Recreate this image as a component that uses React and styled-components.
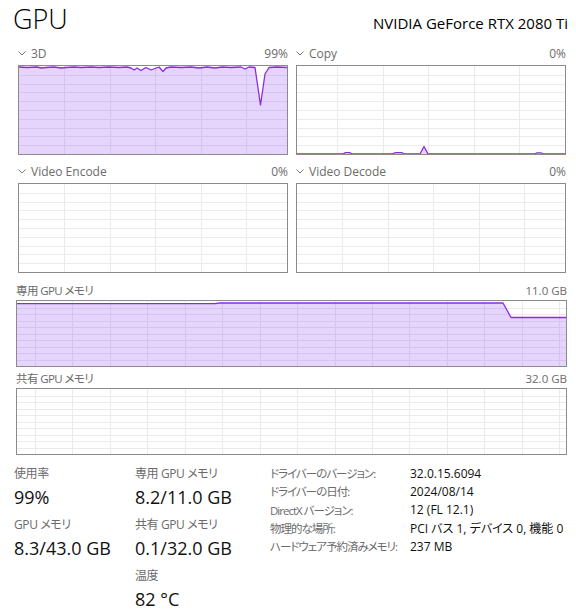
import styled, { createGlobalStyle } from "styled-components";

const GlobalStyle = createGlobalStyle`
  body {
    margin: 0;
    background: #fff;
    font-family: "Open Sans", "Noto Sans CJK JP", sans-serif;
    font-feature-settings: "palt";
    color: #000;
  }
`;

const FILL = "rgba(125, 45, 240, 0.2)";
const LINE = "#8a2be2";

const Page = styled.div`
  width: 576px;
  height: 612px;
  overflow: hidden;
`;

const Header = styled.header`
  height: 42px;
  display: flex;
  align-items: baseline;
  justify-content: space-between;
  padding: 0 8px 0 13px;
`;

const Title = styled.h1`
  margin: 0;
  font-size: 27px;
  font-weight: 300;
  line-height: 38px;
`;

const DeviceName = styled.div`
  font-size: 15px;
`;

const ChartGrid = styled.div`
  display: grid;
  grid-template-columns: 270px 270px;
  column-gap: 8px;
  row-gap: 5px;
  padding: 0 10px 0 18px;
`;

const ChartHead = styled.div`
  height: 23px;
  display: flex;
  align-items: center;
  justify-content: space-between;
  font-size: 12px;
  color: #6b6b6b;
`;

const HeadName = styled.span`
  display: inline-flex;
  align-items: center;
  gap: 5px;
`;

const GraphBox = styled.div`
  box-sizing: border-box;
  height: ${(p) => p.$h}px;
  border: 1px solid #8b8b8b;
  background: #fff;
  svg {
    display: block;
  }
`;

const MemorySection = styled.section`
  padding: 0 9px 0 16px;
  margin-top: 7px;
`;

const MemHead = styled.div`
  height: 20px;
  display: flex;
  align-items: center;
  justify-content: space-between;
  font-size: 11.5px;
  color: #6b6b6b;
  margin-top: ${(p) => p.$gap || 0}px;
`;

const Jp = styled.span`
  letter-spacing: -0.6px;
`;

const Stats = styled.div`
  display: grid;
  grid-template-columns: 121px 135px 1fr;
  padding: 0 0 0 14px;
  margin-top: 8px;
`;

const StatColumn = styled.div`
  display: flex;
  flex-direction: column;
`;

const StatLabel = styled.div`
  height: 21px;
  line-height: 21px;
  font-size: 12px;
  color: #6b6b6b;
  letter-spacing: -0.4px;
`;

const StatValue = styled.div`
  height: 30px;
  line-height: 27px;
  font-size: 18px;
  color: #111;
`;

const InfoTable = styled.div`
  display: grid;
  grid-template-columns: 140px 1fr;
  grid-auto-rows: 18.3px;
  align-items: center;
  font-size: 12px;
  margin-top: 1px;
`;

const InfoKey = styled.div`
  color: #6b6b6b;
  white-space: nowrap;
  font-size: 11.5px;
  letter-spacing: -1px;
`;

const InfoVal = styled.div`
  color: #111;
  white-space: nowrap;
`;

function Chevron() {
  return (
    <svg width="8" height="5" viewBox="0 0 8 5">
      <path d="M0.5 0.5 L4 4 L7.5 0.5" fill="none" stroke="#7a7a7a" strokeWidth="1" />
    </svg>
  );
}

function Graph({ w, h, colStart, colStep, rows, points }) {
  const vlines = [];
  for (let x = colStart; x < w; x += colStep) vlines.push(Math.round(x));
  const hlines = [];
  for (let i = 1; i < rows; i++) hlines.push(Math.round((h / rows) * i));
  const area =
    points && points.length
      ? [...points, [w, h], [0, h]].map((p) => p.join(",")).join(" ")
      : null;
  const line = points ? points.map((p) => p.join(",")).join(" ") : null;
  return (
    <svg width={w} height={h} viewBox={`0 0 ${w} ${h}`}>
      {vlines.map((x) => (
        <line key={"v" + x} x1={x + 0.5} x2={x + 0.5} y1="0" y2={h} stroke="#ebebeb" />
      ))}
      {hlines.map((y) => (
        <line key={"h" + y} x1="0" x2={w} y1={y + 0.5} y2={y + 0.5} stroke="#ebebeb" />
      ))}
      {area && <polygon points={area} fill={FILL} />}
      {line && <polyline points={line} fill="none" stroke={LINE} strokeWidth="1.3" strokeLinejoin="round" />}
    </svg>
  );
}

const load3d = [
  [0, 1], [8, 1.5], [18, 1], [22, 2], [27, 1.5], [35, 1], [42, 2], [47, 1.5],
  [55, 1], [62, 1.5], [72, 1], [80, 1.5], [90, 1], [100, 1.5], [108, 1],
  [112, 2], [115, 4], [118, 2], [122, 4.5], [127, 1.5], [132, 4], [136, 2.5],
  [140, 1], [144, 5.5], [147, 2], [152, 1], [162, 1.5], [172, 1], [180, 2],
  [188, 1], [196, 2], [203, 1], [212, 1.5], [222, 1], [226, 3], [230, 1],
  [236, 1.5], [241.5, 39], [246, 8], [250, 1.5], [258, 1], [268, 1.5],
];

const loadCopy = [
  [0, 88], [46, 88], [48, 86.7], [53, 86.7], [55, 88], [96, 88], [98, 86.7],
  [105, 86.7], [107, 88], [123, 88], [127, 80.5], [131, 88], [238, 88],
  [240, 86.8], [244, 86.8], [246, 88], [268, 88],
];

const dedicated = [
  [0, 2.7], [198, 2.7], [203, 2], [486, 2], [494, 16.5], [549, 16.5],
];

const charts = [
  { name: "3D", value: "99%", points: load3d, offset: 45 },
  { name: "Copy", value: "0%", points: loadCopy, offset: 40 },
  { name: "Video Encode", value: "0%", points: null, offset: 45 },
  { name: "Video Decode", value: "0%", points: null, offset: 45 },
];

const info = [
  ["ドライバーのバージョン:", "32.0.15.6094"],
  ["ドライバーの日付:", "2024/08/14"],
  ["DirectX バージョン:", "12 (FL 12.1)"],
  ["物理的な場所:", "PCI バス 1, デバイス 0, 機能 0"],
  ["ハードウェア予約済みメモリ:", "237 MB"],
];

export default function App() {
  return (
    <Page>
      <GlobalStyle />
      <Header>
        <Title>GPU</Title>
        <DeviceName>NVIDIA GeForce RTX 2080 Ti</DeviceName>
      </Header>

      <ChartGrid>
        {charts.map((c) => (
          <div key={c.name}>
            <ChartHead>
              <HeadName>
                <Chevron />
                {c.name}
              </HeadName>
              <span>{c.value}</span>
            </ChartHead>
            <GraphBox $h={90}>
              <Graph w={268} h={88} colStart={c.offset} colStep={45.5} rows={10} points={c.points} />
            </GraphBox>
          </div>
        ))}
      </ChartGrid>

      <MemorySection>
        <MemHead>
          <Jp>専用 GPU メモリ</Jp>
          <span>11.0 GB</span>
        </MemHead>
        <GraphBox $h={67}>
          <Graph w={549} h={65} colStart={18} colStep={37.45} rows={10} points={dedicated} />
        </GraphBox>
        <MemHead $gap={1}>
          <Jp>共有 GPU メモリ</Jp>
          <span>32.0 GB</span>
        </MemHead>
        <GraphBox $h={67}>
          <Graph w={549} h={65} colStart={18} colStep={37.45} rows={10} points={null} />
        </GraphBox>
      </MemorySection>

      <Stats>
        <StatColumn>
          <StatLabel>使用率</StatLabel>
          <StatValue>99%</StatValue>
          <StatLabel>GPU メモリ</StatLabel>
          <StatValue>8.3/43.0 GB</StatValue>
        </StatColumn>
        <StatColumn>
          <StatLabel>専用 GPU メモリ</StatLabel>
          <StatValue>8.2/11.0 GB</StatValue>
          <StatLabel>共有 GPU メモリ</StatLabel>
          <StatValue>0.1/32.0 GB</StatValue>
          <StatLabel>温度</StatLabel>
          <StatValue>82 °C</StatValue>
        </StatColumn>
        <InfoTable>
          {info.map(([k, v]) => [
            <InfoKey key={k}>{k}</InfoKey>,
            <InfoVal key={v}>{v}</InfoVal>,
          ])}
        </InfoTable>
      </Stats>
    </Page>
  );
}
